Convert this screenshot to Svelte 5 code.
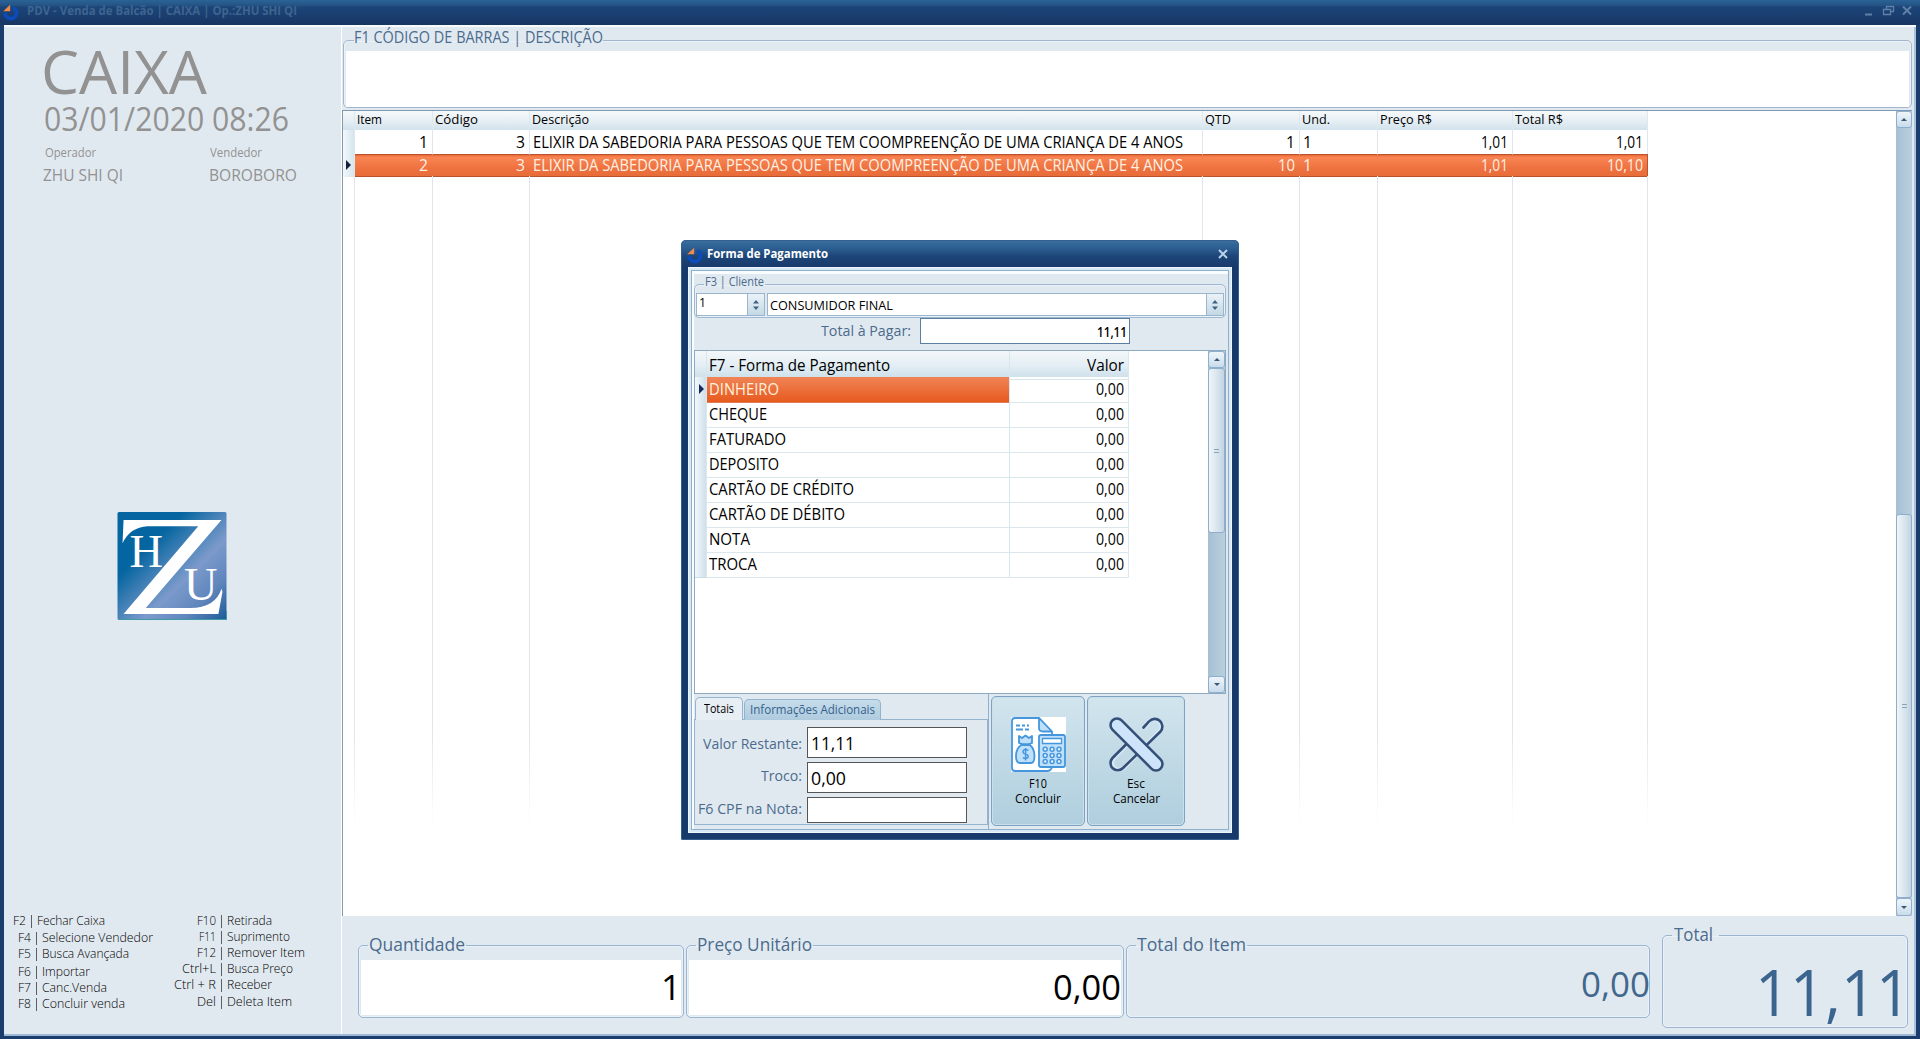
<script>
  const columns = [
    { key: 'item', title: 'Item', tw: 25, num: true },
    { key: 'code', title: 'Código', tw: 43, num: true },
    { key: 'desc', title: 'Descrição', tw: 57 },
    { key: 'qty', title: 'QTD', tw: 26, num: true },
    { key: 'unit', title: 'Und.', tw: 28 },
    { key: 'price', title: 'Preço R$', tw: 52, num: true },
    { key: 'total', title: 'Total R$', tw: 48, num: true }
  ];
  const sales = [
    { cells: [['1', 9], ['3', 9], ['ELIXIR DA SABEDORIA PARA PESSOAS QUE TEM COOMPREENÇÃO DE UMA CRIANÇA DE 4 ANOS', 650], ['1', 9], ['1', 9], ['1,01', 27], ['1,01', 27]] },
    { active: true, cells: [['2', 9], ['3', 9], ['ELIXIR DA SABEDORIA PARA PESSOAS QUE TEM COOMPREENÇÃO DE UMA CRIANÇA DE 4 ANOS', 650], ['10', 17], ['1', 9], ['1,01', 27], ['10,10', 36]] }
  ];
  const methods = [
    ['DINHEIRO', 70], ['CHEQUE', 58], ['FATURADO', 77], ['DEPOSITO', 70],
    ['CARTÃO DE CRÉDITO', 145], ['CARTÃO DE DÉBITO', 136], ['NOTA', 41], ['TROCA', 48]
  ];
  const keysLeft = [
    { k: 'F2', kw: 13, label: 'Fechar Caixa', w: 68, gap: 0, shift: true },
    { k: 'F4', kw: 13, label: 'Selecione Vendedor', w: 111, gap: 1 },
    { k: 'F5', kw: 13, label: 'Busca Avançada', w: 87, gap: 0 },
    { k: 'F6', kw: 13, label: 'Importar', w: 48, gap: 2 },
    { k: 'F7', kw: 13, label: 'Canc.Venda', w: 65, gap: 0 },
    { k: 'F8', kw: 13, label: 'Concluir venda', w: 83, gap: 0 }
  ];
  const keysRight = [
    { k: 'F10', kw: 19, label: 'Retirada', w: 45, gap: 0 },
    { k: 'F11', kw: 17, label: 'Suprimento', w: 63, gap: 0 },
    { k: 'F12', kw: 19, label: 'Remover Item', w: 78, gap: 0 },
    { k: 'Ctrl+L', kw: 34, label: 'Busca Preço', w: 66, gap: 0 },
    { k: 'Ctrl + R', kw: 42, label: 'Receber', w: 45, gap: 0 },
    { k: 'Del', kw: 19, label: 'Deleta Item', w: 65, gap: 1 }
  ];
  const pad = [0, 1, 2].flatMap((r) => [0, 1, 2].map((c) => [c, r]));

  // Condenses or widens a label so that it fills its allotted width.
  function fit(node, width) {
    const natural = node.getBoundingClientRect().width;
    if (natural) node.style.transform = `scaleX(${width / natural})`;
  }
</script>

{#snippet t(text, w)}
  <span class="t" style:width="{w}px"><span class="ti" use:fit={w}>{text}</span></span>
{/snippet}

{#snippet brand()}
  <svg class="brand" viewBox="0 0 16 17">
    <path d="M10.200 3.700A5.700 5.700 0 1 1 2.100 9.200" fill="none" stroke="#0b4cba" stroke-width="3.800" />
    <path d="M7.200 0.800V7.200H0.200Z" fill="#f08a4b" />
  </svg>
{/snippet}

{#snippet scroll(kind)}
  <div class="scroll {kind}">
    <div class="sb"><svg viewBox="0 0 6 3"><path d="M0 3L3 0L6 3Z" /></svg></div>
    <div class="thumb"><i></i></div>
    <div class="space"></div>
    <div class="sb"><svg viewBox="0 0 6 3"><path d="M0 0L3 3L6 0Z" /></svg></div>
  </div>
{/snippet}

{#snippet spin()}
  <span class="spin">
    <svg viewBox="0 0 6 10"><path d="M0 3.4L3 0L6 3.4ZM0 6.6L3 10L6 6.6Z" /></svg>
  </span>
{/snippet}

{#snippet keyList(items, side)}
  <ul class="keys {side}">
    {#each items as it}
      <li class:shift={it.shift} style:margin-top="{it.gap}px">
        <b>{@render t(it.k, it.kw)}</b><i></i>{@render t(it.label, it.w)}
      </li>
    {/each}
  </ul>
{/snippet}

<div class="app">
  <header class="bar">
    {@render brand()}
    <span class="title">{@render t('PDV - Venda de Balcão | CAIXA | Op.:ZHU SHI QI', 270)}</span>
    <svg class="wins" viewBox="0 0 50 12" fill="none" stroke="#5f81a8">
      <path d="M1 9.5H8" stroke-width="2" />
      <path d="M19.5 4.5H26.500V9.500H19.500ZM22.500 4V1.500H29.500V6.500H27" stroke-width="1.3" />
      <path d="M39 1.500L47 9.500M47 1.500L39 9.500" stroke-width="2" />
    </svg>
  </header>

  <div class="body">
    <aside>
      <h1>{@render t('CAIXA', 166)}</h1>
      <div class="date">{@render t('03/01/2020 08:26', 245)}</div>
      <div class="who small"><span>{@render t('Operador', 51)}</span><span>{@render t('Vendedor', 52)}</span></div>
      <div class="who names"><span>{@render t('ZHU SHI QI', 80)}</span><span>{@render t('BOROBORO', 88)}</span></div>

      <svg class="logo" viewBox="0 0 108 108">
        <defs>
          <linearGradient id="lg" x1="0" y1="0" x2="1" y2="1">
            <stop offset="0.3" stop-color="#0565a0" />
            <stop offset="0.62" stop-color="#7c9acb" />
            <stop offset="0.8" stop-color="#5f86bd" />
            <stop offset="1" stop-color="#1b5a98" />
          </linearGradient>
        </defs>
        <rect x="0" y="0" width="108" height="107" rx="1.500" fill="url(#lg)" />
        <path d="M2 106.500H108V98" fill="none" stroke="#3f9aa5" />
        <path d="M6 8H103L28 95H72Q97 95 103 76L104 79L100 101H6L80 14H30Q12 15 5 31Z" fill="#fff" />
        <text x="12" y="54" textLength="33">H</text>
        <text x="66" y="87" textLength="31">U</text>
      </svg>

      <div class="shortcuts">
        {@render keyList(keysLeft, 'left')}
        {@render keyList(keysRight, 'right')}
      </div>
    </aside>

    <main>
      <fieldset class="search">
        <legend>{@render t('F1 CÓDIGO DE BARRAS | DESCRIÇÃO', 249)}</legend>
        <div class="entry"></div>
      </fieldset>

      <section class="grid">
        <div class="table">
          <div class="row head">
            <span></span>
            {#each columns as c}<span>{@render t(c.title, c.tw)}</span>{/each}
          </div>
          {#each sales as s}
            <div class="row line" class:active={s.active}>
              <span class="ind">{#if s.active}<svg viewBox="0 0 5 10"><path d="M0 0L5 5L0 10Z" /></svg>{/if}</span>
              {#each s.cells as [text, w], i}
                <span class:num={columns[i].num}>{@render t(text, w)}</span>
              {/each}
            </div>
          {/each}
          <div class="row rest"><span></span>{#each columns as c (c.key)}<span></span>{/each}</div>
        </div>
        {@render scroll('main')}
      </section>

      <footer>
        <fieldset class="qty">
          <legend>{@render t('Quantidade', 96)}</legend>
          <div class="val">{@render t('1', 20)}</div>
        </fieldset>
        <fieldset class="unit">
          <legend>{@render t('Preço Unitário', 115)}</legend>
          <div class="val">{@render t('0,00', 68)}</div>
        </fieldset>
        <fieldset class="sum">
          <legend>{@render t('Total do Item', 109)}</legend>
          <div class="val blue">{@render t('0,00', 69)}</div>
        </fieldset>
        <fieldset class="total">
          <legend>{@render t('Total', 39)}</legend>
          <div class="big">{@render t('11,11', 156)}</div>
        </fieldset>
      </footer>
    </main>
  </div>

  <div class="dialog">
    <div class="dbar">
      {@render brand()}
      <span class="dtitle">{@render t('Forma de Pagamento', 121)}</span>
      <svg class="x" viewBox="0 0 10 10"><path d="M1 1L9 9M9 1L1 9" stroke="#b9d3ea" stroke-width="2" /></svg>
    </div>
    <div class="frame">
      <div class="inner">
        <fieldset class="client">
          <legend>{@render t('F3 | Cliente', 59)}</legend>
          <div class="pickers">
            <div class="pick code"><span>{@render t('1', 7)}</span>{@render spin()}</div>
            <div class="pick name"><span>{@render t('CONSUMIDOR FINAL', 123)}</span>{@render spin()}</div>
          </div>
        </fieldset>
        <div class="due">
          <span class="lab">{@render t('Total à Pagar:', 90)}</span>
          <div class="box">{@render t('11,11', 30)}</div>
        </div>
        <div class="pay">
          <div class="plist">
            <div class="prow phead"><span></span><span>{@render t('F7 - Forma de Pagamento', 181)}</span><span class="num">{@render t('Valor', 37)}</span></div>
            {#each methods as [name, w], i}
              <div class="prow" class:sel={i === 0}>
                <span class="ind">{#if i === 0}<svg viewBox="0 0 5 10"><path d="M0 0L5 5L0 10Z" /></svg>{/if}</span>
                <span class="pname">{@render t(name, w)}</span>
                <span class="num">{@render t('0,00', 28)}</span>
              </div>
            {/each}
          </div>
          {@render scroll('modal')}
        </div>
        <div class="bottom">
          <div class="tabs">
            <div class="tabrow">
              <span class="tab on">{@render t('Totais', 30)}</span>
              <span class="tab">{@render t('Informações Adicionais', 125)}</span>
            </div>
            <div class="panel">
              <div class="f f1"><span class="lab">{@render t('Valor Restante:', 99)}</span><div class="box">{@render t('11,11', 44)}</div></div>
              <div class="f f2"><span class="lab">{@render t('Troco:', 41)}</span><div class="box">{@render t('0,00', 35)}</div></div>
              <div class="f f3"><span class="lab">{@render t('F6 CPF na Nota:', 104)}</span><div class="box"></div></div>
            </div>
          </div>
          <div class="btns">
            <button class="ok">
              <svg viewBox="0 0 55 55" fill="none" stroke="#4596dc" stroke-width="1.800" stroke-linejoin="round">
                <rect width="55" height="55" fill="#fff" stroke="none" />
                <path d="M28 1H4Q1 1 1 4V51Q1 54 4 54H36Q40 54 41 50V15Z" />
                <path d="M28 1V11Q28 14.500 32 14.500H41Z" fill="#bfe0fb" />
                <path d="M5 8.500H9M11 8.500H14M16 8.500H18M5 12.500H12M14 12.500H18" />
                <path d="M8 19L11 21L14.500 18.500L18 21L21 19V26Q14.500 28.500 8 26Z" fill="#bfe0fb" />
                <path d="M10 28H19Q23.500 32 23.500 39Q23.500 46 20 46H9Q5 46 5 39Q5 32 10 28Z" fill="#bfe0fb" />
                <path d="M17.500 33.500Q14.500 31.500 12.200 33.500Q11.500 36.500 14.500 37Q18 38 17 40.500Q14.500 42.500 11.800 40.500M14.600 31V43.500" stroke-width="1.500" />
                <rect x="28" y="18" width="26" height="32" rx="2" fill="#bfe0fb" />
                <rect x="31.500" y="21.500" width="19" height="5" fill="#fff" stroke-width="1.300" />
                {#each pad as [c, r]}
                  <circle cx={34.2 + c * 6.9} cy={32.2 + r * 6.2} r="2" fill="#e6f3fe" stroke-width="1.500" />
                {/each}
              </svg>
              <span>{@render t('F10', 18)}</span><span>{@render t('Concluir', 46)}</span>
            </button>
            <button class="esc">
              <svg viewBox="0 0 55 55" fill="none">
                <g stroke-linecap="round">
                  <path d="M35.500 10L39.500 5A7.200 7.200 0 0 1 51 14L14.500 51A7 7 0 0 1 4 42L19 26" stroke="#d6e8f6" stroke-width="4.500" />
                  <path d="M34.500 10.500L40 4.500A7.200 7.200 0 0 1 51.500 14.500L14 51A7.200 7.200 0 0 1 3.500 41L22 22.500" stroke="#344f78" stroke-width="2.600" />
                  <path d="M8 8L47 47" stroke="#344f78" stroke-width="15.500" />
                  <path d="M8 8L47 47" stroke="#cde4fa" stroke-width="10.400" />
                </g>
              </svg>
              <span>{@render t('Esc', 18)}</span><span>{@render t('Cancelar', 47)}</span>
            </button>
          </div>
        </div>
      </div>
    </div>
  </div>
</div>

<style>
  :global(body) { margin: 0; }
  * { box-sizing: border-box; }
  .app {
    position: relative; display: flex; flex-direction: column; width: 1920px; height: 1039px; overflow: hidden;
    background: #1a3d6d; font-family: 'Open Sans', 'Noto Sans', sans-serif; color: #000;
  }
  .t { display: inline-block; white-space: nowrap; vertical-align: top; text-align: left; }
  .ti { display: inline-block; transform-origin: 0 50%; }
  fieldset { margin: 0; padding: 0; min-width: 0; border: 1px solid #9bb4cf; border-radius: 5px; box-shadow: inset 0 0 0 1px #e9f2fa; }
  legend { padding: 0; color: #4b6b8c; display: flex; }

  .bar { display: flex; height: 25px; background: linear-gradient(#2b6396, #255587 5px, #1d4578 7px, #193b6c 19px, #17365f); }
  .brand { width: 16px; height: 17px; flex: none; }
  .bar .brand { margin: 4px 8px 0 3px; }
  .title { flex: 1; font-size: 12px; font-weight: 700; line-height: 22px; color: #3d658f; }
  .wins { width: 50px; height: 12px; margin: 5px 6px 0 0; }

  .body { flex: 1; display: flex; min-height: 0; margin: 0 4px 3px; background: #e1e9f0; border-top: 2px solid #f6fafd; border-bottom: 2px solid #9db9d3; }
  aside { width: 338px; flex: none; padding-top: 14px; border-right: 1px solid #fff; color: #929292; }
  h1 { margin: 0 0 0 37px; font-size: 60px; line-height: 60px; font-weight: 400; }
  .date { margin: 0 0 0 40px; font-size: 32px; line-height: 36px; }
  .who { display: grid; grid-template-columns: 165px 1fr; margin-left: 39px; }
  .small { margin-top: 8px; font-size: 12px; line-height: 16px; margin-left: 41px; }
  .names { margin-top: 4px; font-size: 15.5px; line-height: 20px; grid-template-columns: 166px 1fr; }
  .logo { display: block; width: 110px; height: 109px; margin: 327px 0 0 113px; }
  .logo text { font-family: 'Liberation Serif', serif; font-size: 46px; fill: #fff; }
  .shortcuts { display: flex; margin: 292px 0 0 -1px; font-size: 12.5px; line-height: 16px; font-weight: 300; color: #000; }
  .keys { list-style: none; margin: 0; padding: 0; }
  .keys li { display: flex; }
  .keys b { font-weight: 300; text-align: right; }
  .keys i { width: 1px; height: 13px; margin: 2px 5px 0 5px; background: #5a6066; }
  .left { width: 165px; }
  .left b { width: 28px; }
  .left .shift b { width: 23px; }
  .right b { width: 48px; }

  main { flex: 1; display: flex; flex-direction: column; min-width: 0; padding-right: 2px; border-right: 2px solid #a9c3dc; }
  .search { height: 78px; margin: 3px 0 0 1px; border-color: #a3b6cb; }
  .search legend { margin-left: 10px; height: 20px; font-size: 16px; line-height: 15px; }
  .entry { height: 56px; margin: 1px 2px 0; background: #fff; }
  .grid { flex: none; display: flex; height: 806px; margin-top: 2px; background: #fff; border-top: 1px solid #7f9ab3; border-left: 1px solid #8998a8; }
  .table { flex: 1; display: flex; flex-direction: column; }
  .row { display: grid; grid-template-columns: 12px 78px 97px 673px 97px 78px 135px 135px; width: 1305px; }
  .row > span { border-right: 1px solid #dfe6ec; }
  .head { height: 19px; background: linear-gradient(#f6f9fb, #e5eef4 55%, #d1e2ec); font-size: 12px; line-height: 17px; }
  .head > span { padding-left: 2px; border-color: #dce9f0; }
  .line { height: 24px; font-size: 15.5px; line-height: 25px; }
  .line > span { padding-left: 3px; }
  .line .num, .prow .num { padding: 0 4px 0 0; text-align: right; }
  .line .ind { padding: 0; background: linear-gradient(90deg, #f3f8fb, #d5e5ee); }
  .ind svg { display: block; width: 5px; height: 10px; margin: 6px 0 0 3px; fill: #14233c; }
  .active { height: 22px; color: #fff1e4; }
  .active > span:not(.ind) { border-right-color: transparent; background: linear-gradient(#ed6f3c 0 1px, #fa8554 2px, #ee7341 60%, #e86c38); background-clip: border-box; border-top: 1px solid #b9532d; border-bottom: 1px solid #b9532d; line-height: 21px; }
  .active > span:last-child { border-right: 1px solid #b9532d !important; }
  .rest { flex: 1; }
  .rest > span { border-image: linear-gradient(#dfe6ec 75%, #fff 88%) 1; border-width: 0 1px 0 0; border-style: solid; }

  .scroll { display: flex; flex-direction: column; width: 16px; flex: none; background: linear-gradient(90deg, #a6c0d1, #b9cfdf); }
  .sb { display: flex; align-items: center; justify-content: center; height: 17px; flex: none; border: 1px solid #8faecb; border-radius: 3px; background: linear-gradient(#eef5fa, #c9dcea); }
  .sb svg { width: 6px; height: 3px; fill: #3c5878; }
  .thumb { display: flex; align-items: center; justify-content: center; border: 1px solid #8faecb; border-radius: 3px; background: linear-gradient(90deg, #f0f5f9, #d5e3ec 60%, #c3d5e1); flex: none; }
  .thumb i { width: 5px; height: 4px; border: solid #88a4bb; border-width: 1px 0; }
  .space { flex: 1; }
  .main .thumb { order: 1; height: 384px; }
  .main .sb:last-child { order: 2; height: 18px; }
  .modal { width: 17px; }
  .modal .thumb { height: 165px; }

  footer { display: flex; align-items: flex-start; flex: 1; padding: 7px 0 0 16px; }
  footer fieldset { height: 85px; margin: 10px 2px 0 0; }
  footer legend { height: 24px; margin-left: 9px; padding: 0 1px; font-size: 18px; line-height: 22px; }
  .qty { width: 326px; }
  .unit { width: 438px; }
  .sum { width: 524px; }
  footer .sum { margin-right: 12px; }
  footer .total { width: 246px; height: 105px; margin: 0; }
  .total legend { padding: 0 6px 0 2px; }
  .val { height: 55px; margin: 3px 2px 0; background: #fff; font-size: 35px; line-height: 53px; text-align: right; }
  .val.blue { margin-right: -1px; background: none; color: #42678c; line-height: 48px; }
  .big { font-size: 64px; line-height: 90px; text-align: right; color: #3b658f; margin-right: -4px; }

  .dialog {
    position: absolute; left: 681px; top: 240px; width: 558px; height: 600px; padding: 0 7px 7px; border-radius: 5px 5px 2px 2px;
    background: linear-gradient(#3a709f, #2d5f92 8px, #1d4679 16px, #183a6a 27px); box-shadow: inset 0 0 0 1px #34608f;
  }
  .dbar { display: flex; height: 27px; }
  .dbar .brand { margin: 7px 4px 0 -1px; }
  .dtitle { flex: 1; color: #fff; font-size: 12px; font-weight: 700; line-height: 28px; }
  .x { width: 10px; height: 10px; margin: 9px 4px 0 0; }
  .frame { height: 566px; padding: 2px; background: #d8e8f4; border: 1px solid #eef6fb; }
  .inner { height: 100%; display: flex; flex-direction: column; padding: 2px 0 0 2px; background: #e1e9f0; border: 1px solid #8fb0ca; box-shadow: inset 2px 3px 0 #fafdff; }
  .client { height: 43px; width: 532px; margin: 2px 0 0; border-color: #9db8cf; }
  .client legend { height: 18px; margin-left: 9px; padding: 0 1px; font-size: 13px; line-height: 13px; }
  .pickers { display: flex; gap: 2px; padding: 0 0 0 1px; }
  .pick { display: flex; height: 23px; border: 1px solid #9bb6cc; background: #fff; }
  .pick > span:first-child { flex: 1; padding-left: 2px; }
  .code { width: 69px; font-size: 12px; line-height: 18px; }
  .name { width: 457px; font-size: 13px; line-height: 22px; }
  .spin { display: flex; align-items: center; justify-content: center; width: 17px; border-left: 1px solid #9bb6cc; background: linear-gradient(#eaf2f7, #c3d9e5); }
  .spin svg { width: 6px; height: 10px; fill: #3f6183; }
  .lab { color: #4b6b8c; font-size: 15px; }
  .due { display: flex; justify-content: flex-end; align-items: flex-start; gap: 9px; width: 436px; height: 32px; }
  .due .box { width: 210px; height: 26px; padding-right: 2px; border: 1px solid #5b7fa3; background: #fff; text-align: right; font-size: 15px; font-weight: 600; line-height: 24px; }
  .due .lab { line-height: 25px; }
  .pay { display: flex; width: 532px; height: 344px; background: #fff; border: 1px solid #8eaac1; }
  .plist { flex: 1; }
  .prow { display: grid; grid-template-columns: 12px 303px 119px; width: 434px; height: 25px; font-size: 15.5px; line-height: 25px; }
  .prow > span { border-right: 1px solid #dbe7ef; border-bottom: 1px solid #dbe7ef; padding-left: 2px; }
  .prow .ind { padding: 0; background: linear-gradient(90deg, #f3f8fb, #cfe0ea); border-bottom-color: #cbdde9; }
  .prow .ind svg { margin: 7px 0 0 4px; fill: #13295a; }
  .phead { background: linear-gradient(#f3f7fa, #e4eef4 55%, #cfe1eb); height: 26px; font-size: 16px; line-height: 28px; }
  .phead > span { border-color: #d8e6ee; }
  .phead .num { padding-right: 4px; }
  .sel .pname { background: linear-gradient(#f08456, #e75a1e); color: #fff0df; border-bottom-color: #e27a52; }

  .bottom { flex: 1; display: flex; }
  .tabs { width: 295px; padding: 2px 0 0; border-right: 1px solid #8fafca; }
  .tabrow { display: flex; align-items: flex-end; height: 24px; padding-left: 1px; font-size: 12px; gap: 1px; }
  .tab { height: 21px; padding: 0 5px; border: 1px solid #94b3cc; border-bottom: 0; border-radius: 5px 5px 0 0; background: linear-gradient(#c6dcea, #aecbde); color: #35618c; line-height: 19px; }
  .tab.on { height: 23px; padding: 0 8px; background: #e7eff5; color: #000; line-height: 21px; }
  .panel { width: 294px; height: 106px; margin-top: -1px; border: 1px solid #94b3cc; padding: 7px 20px 0 0; }
  .f { display: flex; justify-content: flex-end; gap: 5px; }
  .f .box { width: 160px; height: 31px; padding-left: 3px; border: 1px solid #555; background: #fff; font-size: 17.500px; line-height: 30px; }
  .f .lab { line-height: 32px; }
  .f2 { margin-top: 3px; }
  .f2 .lab { line-height: 26px; }
  .f3 { margin-top: 4px; }
  .f3 .box { height: 26px; }
  .f3 .lab { line-height: 23px; }
  .btns { display: flex; gap: 2px; padding: 2px 0 0 2px; }
  button { display: flex; flex-direction: column; align-items: center; height: 130px; padding: 20px 0 0; border: 1px solid #7fa2c0; border-radius: 5px; background: linear-gradient(#d2e5ee, #c0d9e5 50%, #afcede); font: 12px/15px 'Open Sans', 'Noto Sans', sans-serif; color: #000; box-shadow: inset 0 0 0 1px #c9dfec; }
  button svg { width: 55px; height: 55px; margin-bottom: 4px; }
  .ok { width: 94px; }
  .esc { width: 98px; }
</style>
